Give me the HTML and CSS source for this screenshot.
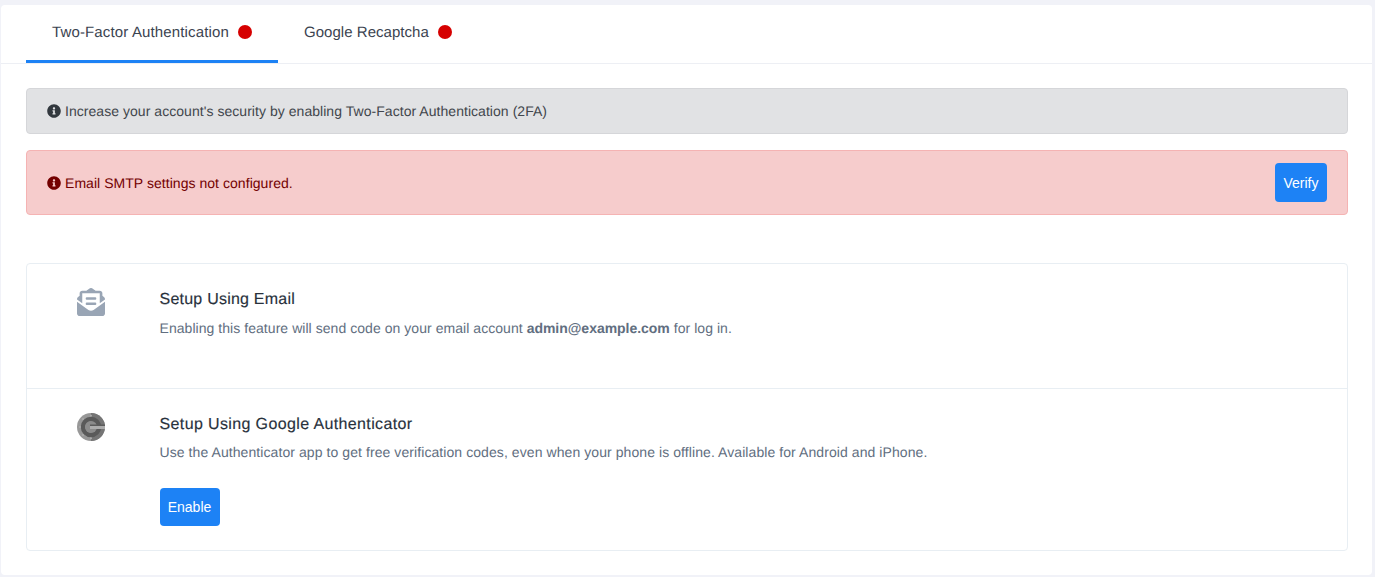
FILE: index.html
```html
<!DOCTYPE html>
<html lang="en">
<head>
<meta charset="utf-8">
<title>Security Settings</title>
<link rel="stylesheet" href="styles.css">
</head>
<body>
<main class="panel">
  <nav class="tabs">
    <a class="tab active">Two-Factor Authentication<span class="dot"></span></a>
    <a class="tab">Google Recaptcha<span class="dot"></span></a>
  </nav>
  <section class="content">
    <div class="alert alert-grey">
      <span class="alert-text"><svg class="info" viewBox="0 0 512 512"><path d="M256 8C119.043 8 8 119.083 8 256c0 136.997 111.043 248 248 248s248-111.003 248-248C504 119.083 392.957 8 256 8zm0 110c23.196 0 42 18.804 42 42s-18.804 42-42 42-42-18.804-42-42 18.804-42 42-42zm56 254c0 6.627-5.373 12-12 12h-88c-6.627 0-12-5.373-12-12v-24c0-6.627 5.373-12 12-12h12v-64h-12c-6.627 0-12-5.373-12-12v-24c0-6.627 5.373-12 12-12h64c6.627 0 12 5.373 12 12v100h12c6.627 0 12 5.373 12 12v24z"/></svg>Increase your account's security by enabling Two-Factor Authentication (2FA)</span>
    </div>
    <div class="alert alert-red">
      <span class="alert-text"><svg class="info" viewBox="0 0 512 512"><path d="M256 8C119.043 8 8 119.083 8 256c0 136.997 111.043 248 248 248s248-111.003 248-248C504 119.083 392.957 8 256 8zm0 110c23.196 0 42 18.804 42 42s-18.804 42-42 42-42-18.804-42-42 18.804-42 42-42zm56 254c0 6.627-5.373 12-12 12h-88c-6.627 0-12-5.373-12-12v-24c0-6.627 5.373-12 12-12h12v-64h-12c-6.627 0-12-5.373-12-12v-24c0-6.627 5.373-12 12-12h64c6.627 0 12 5.373 12 12v100h12c6.627 0 12 5.373 12 12v24z"/></svg>Email SMTP settings not configured.</span>
      <button class="btn btn-verify">Verify</button>
    </div>
    <div class="methods">
      <div class="method method-email">
        <div class="method-icon">
          <svg class="mail-icon" width="28" height="28" viewBox="0 0 512 512"><path fill="#99a5b5" d="M176 216h160c8.840 0 16-7.160 16-16v-16c0-8.840-7.160-16-16-16H176c-8.840 0-16 7.160-16 16v16c0 8.840 7.160 16 16 16zm-16 80c0 8.840 7.160 16 16 16h160c8.840 0 16-7.160 16-16v-16c0-8.840-7.160-16-16-16H176c-8.840 0-16 7.160-16 16v16zm96 121.130c-16.420 0-32.840-5.070-46.860-15.190L0 250.860V464c0 26.510 21.490 48 48 48h416c26.510 0 48-21.490 48-48V250.860L302.860 401.940c-14.020 10.120-30.440 15.190-46.860 15.190zm237.610-254.180c-8.850-6.940-17.240-13.470-29.610-22.810V96c0-26.510-21.490-48-48-48h-77.550c-3.040-2.200-5.870-4.260-9.040-6.560C312.600 29.170 279.200-.35 256 0c-23.200-.35-56.590 29.170-73.410 41.440-3.170 2.300-6 4.370-9.040 6.560H96c-26.510 0-48 21.490-48 48v44.140c-12.370 9.330-20.760 15.870-29.610 22.810A47.995 47.995 0 0 0 0 200.720v10.650l96 69.350V96h320v184.720l96-69.350v-10.650c0-14.740-6.780-28.670-18.390-37.770z"/></svg>
        </div>
        <div class="method-body">
          <h3 class="method-title">Setup Using Email</h3>
          <p class="method-text">Enabling this feature will send code on your email account <strong>admin@example.com</strong> for log in.</p>
        </div>
      </div>
      <div class="method method-google">
        <div class="method-icon">
          <svg class="g-icon" width="28" height="28" viewBox="0 0 28 28"><circle cx="14" cy="14" r="14" fill="#989898"/><path fill="#757575" d="M14 0a14 14 0 0 1 0 28z"/><circle cx="14" cy="14" r="8" fill="none" stroke="#5a5a5a" stroke-width="4.500"/><circle cx="14" cy="14" r="6" fill="#8c8c8c"/><rect x="13" y="11.500" width="15" height="1.500" fill="#5c5c5c"/><rect x="13" y="13" width="15" height="3" fill="#adadad"/><circle cx="3" cy="14" r="1" fill="#adadad"/><circle cx="14" cy="2.800" r="1" fill="#adadad"/><circle cx="14" cy="25.200" r="1" fill="#adadad"/><circle cx="6" cy="6" r="1" fill="#adadad"/><circle cx="6" cy="22" r="1" fill="#adadad"/></svg>
        </div>
        <div class="method-body">
          <h3 class="method-title title-google">Setup Using Google Authenticator</h3>
          <p class="method-text text-google">Use the Authenticator app to get free verification codes, even when your phone is offline. Available for Android and iPhone.</p>
          <button class="btn btn-enable">Enable</button>
        </div>
      </div>
    </div>
  </section>
</main>
</body>
</html>
```
FILE: styles.css
```css
* { box-sizing: border-box; }
html, body { height: 100%; }
body {
  margin: 0;
  background: #f1f2f8;
  font-family: "Liberation Sans", Arial, sans-serif;
  font-size: 14px;
  color: #2b3440;
  padding: 5px 3px 2px 1px;
  overflow: hidden;
  text-rendering: geometricPrecision;
}
.panel {
  background: #fff;
  border-radius: 4px;
  height: 570px;
}
.tabs {
  display: flex;
  height: 59px;
  padding-left: 25px;
  border-bottom: 1px solid #edeff4;
}
.tab {
  display: flex;
  align-items: center;
  height: 58px;
  padding: 0 26px 4px;
  font-size: 15px;
  letter-spacing: 0.04px;
  color: #3b4350;
  white-space: pre;
}
.tab.active {
  border-bottom: 3px solid #1d82f5;
  padding-bottom: 1px;
  letter-spacing: 0.14px;
}
.dot {
  width: 14px;
  height: 14px;
  margin-left: 9px;
  border-radius: 50%;
  background: #d60000;
}
.content { padding: 24px 24px 0 25px; }
.alert {
  display: flex;
  align-items: center;
  justify-content: space-between;
  border: 1px solid;
  border-radius: 4px;
  padding: 0 20px;
  font-size: 14px;
  letter-spacing: 0.045px;
}
.alert-grey {
  height: 46px;
  margin-bottom: 16px;
  background: #e1e2e4;
  border-color: #d5d6d9;
  color: #42464c;
}
.alert-red {
  height: 65px;
  background: #f6cccc;
  border-color: #f5b3b3;
  color: #730000;
}
.alert-text { display: flex; align-items: center; }
.info {
  width: 14px;
  height: 14px;
  margin-right: 4px;
  fill: currentColor;
}
.alert-grey .info { fill: #32383e; }
.btn {
  border: 0;
  border-radius: 4px;
  background: #1d82f5;
  color: #fff;
  font: 14px "Liberation Sans", Arial, sans-serif;
  padding: 0;
}
.btn-verify { width: 52px; height: 39px; }
.btn-enable { width: 60px; height: 38px; margin-top: 26px; }
.methods {
  margin-top: 48px;
  border: 1px solid #e8eef3;
  border-radius: 4px;
  height: 288px;
}
.method { display: flex; }
.method-email { height: 125px; border-bottom: 1px solid #e8eef3; }
.method-google { height: 161px; }
.method-icon {
  width: 132px;
  padding: 24px 0 0 50px;
  flex: none;
}
.g-icon { display: block; }
.mail-icon { display: block; }
.method-body { padding: 26px 0 0 0.500px; }
.method-title {
  margin: 0;
  font-size: 16px;
  font-weight: 400;
  line-height: 20px;
  letter-spacing: 0.23px;
  color: #28313c;
  -webkit-text-stroke: 0.15px #28313c;
}
.title-google { letter-spacing: 0.375px; }
.method-text {
  margin: 8px 0 0;
  font-size: 14px;
  line-height: 20px;
  letter-spacing: 0.05px;
  color: #616e80;
}
.text-google { margin-top: 7px; letter-spacing: 0.077px; }
.method-text strong { font-weight: 700; letter-spacing: -0.03px; }
```
